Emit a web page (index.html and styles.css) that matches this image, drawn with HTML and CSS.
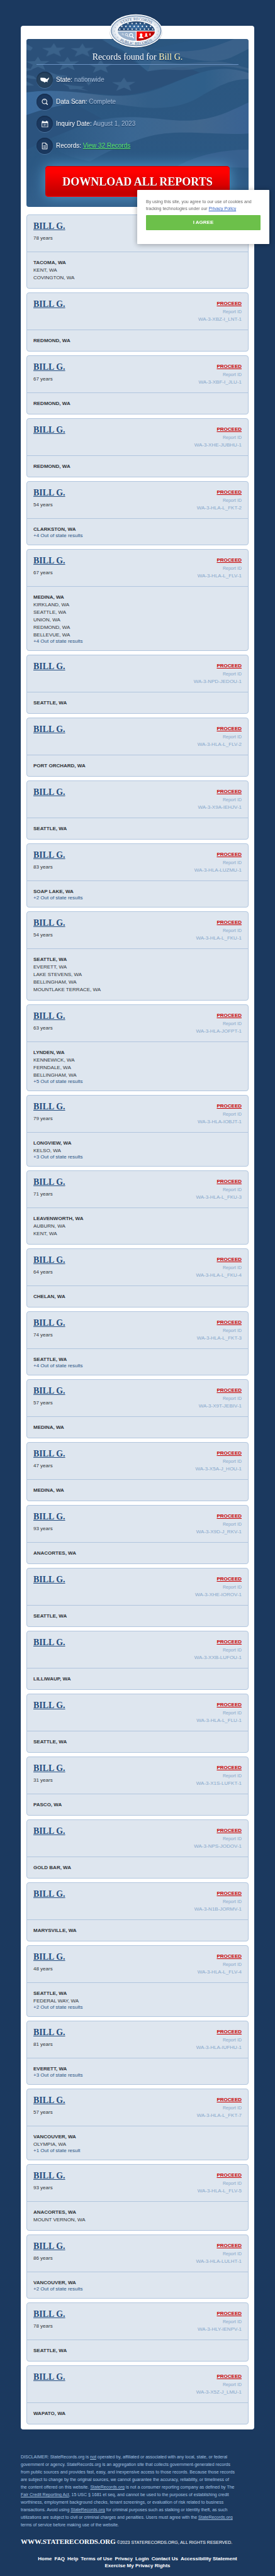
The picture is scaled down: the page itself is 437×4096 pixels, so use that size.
FILE: index.html
```html
<!DOCTYPE html>
<html lang="en">
<head>
<meta charset="utf-8">
<meta name="viewport" content="width=device-width, initial-scale=1">
<title>Records found for Bill G.</title>
<link rel="stylesheet" href="styles.css">
</head>
<body>
<main class="sheet">
  <svg class="logo" viewBox="42 58 480 310" role="img" aria-label="State Records">
    <defs>
      <radialGradient id="rim"><stop offset="0.7" stop-color="#fff"/><stop offset="1" stop-color="#ccd7e4"/></radialGradient>
      <radialGradient id="sky" cx="0.5" cy="0.6"><stop offset="0" stop-color="#3f76ad"/><stop offset="1" stop-color="#21446f"/></radialGradient>
      <radialGradient id="red" cx="0.3" cy="0.3"><stop offset="0.4" stop-color="#f00"/><stop offset="1" stop-color="#b80000"/></radialGradient>
      <clipPath id="oval"><ellipse cx="285" cy="213" rx="161" ry="84"/></clipPath>
      <path id="arc-top" d="M109 214A173 92 0 0 1 461 214"/>
      <path id="arc-bottom" d="M90 216A195 116 0 0 0 480 216"/>
      <path id="star" d="M0-10 2.4-3.2H9.5L3.8 1.2 5.9 8.1 0 4-5.9 8.1-3.8 1.2-9.5-3.2H-2.4Z"/>
      <g id="lens" fill="none" stroke="#fff"><circle r="12" stroke-width="5"/><path d="M9 10 20 22" stroke-width="7"/></g>
      <path id="bust" d="M0-22C-9-22-12-15-11-8-10-2-7 0-7 5-9 9-21 9-22 21H22C21 9 9 9 7 5 7 0 10-2 11-8 12-15 9-22 0-22Z"/>
    </defs>
    <ellipse cx="282" cy="218" rx="229" ry="143" fill="#12263f" opacity="0.35"/>
    <ellipse cx="282" cy="211" rx="229" ry="143" fill="#fff"/>
    <ellipse cx="284" cy="211" rx="216" ry="130" fill="url(#rim)" stroke="#3a608c" stroke-width="5"/>
    <g clip-path="url(#oval)">
      <path fill="url(#sky)" d="M120 125H450V209H120Z"/>
      <path fill="#9ab2cd" d="M120 216H281V300H120Z"/>
      <path fill="url(#red)" d="M288 216H450V300H288Z"/>
    </g>
    <g fill="#fff">
      <use href="#star" x="213" y="147"/><use href="#star" x="249" y="147"/><use href="#star" x="285" y="147"/><use href="#star" x="320" y="147"/><use href="#star" x="356" y="147"/>
      <use href="#star" x="160" y="172"/><use href="#star" x="195" y="172"/><use href="#star" x="231" y="172"/><use href="#star" x="267" y="172"/><use href="#star" x="302" y="172"/><use href="#star" x="338" y="172"/><use href="#star" x="374" y="172"/><use href="#star" x="409" y="172"/>
      <use href="#star" x="142" y="196"/><use href="#star" x="178" y="196"/><use href="#star" x="213" y="196"/><use href="#star" x="249" y="196"/><use href="#star" x="285" y="196"/><use href="#star" x="320" y="196"/><use href="#star" x="356" y="196"/><use href="#star" x="391" y="196"/><use href="#star" x="427" y="196"/>
      <use href="#bust" x="327" y="254"/>
      <use href="#bust" transform="translate(371 247) scale(0.7)"/>
      <use href="#bust" transform="translate(404 241) scale(0.42)"/>
    </g>
    <use href="#lens" transform="translate(167 239) scale(0.5)"/>
    <use href="#lens" transform="translate(200 244) scale(0.85)"/>
    <use href="#lens" transform="translate(240 249) scale(1.2)"/>
    <g fill="#6f8fb3"><circle cx="122" cy="160" r="3"/><circle cx="103" cy="182" r="3"/><circle cx="94" cy="212" r="3"/><circle cx="103" cy="242" r="3"/><circle cx="124" cy="266" r="3"/><circle cx="446" cy="160" r="3"/><circle cx="466" cy="182" r="3"/><circle cx="475" cy="212" r="3"/><circle cx="466" cy="242" r="3"/><circle cx="446" cy="266" r="3"/></g>
    <text class="logo-text"><textPath href="#arc-top" startOffset="50%">STATE RECORDS</textPath></text>
    <text class="logo-text"><textPath href="#arc-bottom" startOffset="50%">PUBLIC RECORDS</textPath></text>
  </svg>

  <section class="hero">
    <svg class="flag" viewBox="0 24 1539 1469" preserveAspectRatio="none" aria-hidden="true">
      <defs>
        <linearGradient id="field" x1="0" y1="0" x2="0" y2="1"><stop offset="0" stop-color="#2b567f"/><stop offset="0.75" stop-color="#2c5883"/><stop offset="1" stop-color="#335f8b"/></linearGradient>
        <linearGradient id="fold"><stop offset="0" stop-color="#3b6c9f"/><stop offset="0.3" stop-color="#426890"/><stop offset="0.55" stop-color="#335f89"/><stop offset="0.8" stop-color="#2f5f8a"/><stop offset="1" stop-color="#42678f"/></linearGradient>
        <linearGradient id="fold-low"><stop offset="0" stop-color="#2c5883"/><stop offset="0.4" stop-color="#3c6995"/><stop offset="0.75" stop-color="#456a91"/><stop offset="1" stop-color="#3b6496"/></linearGradient>
        <path id="fstar" d="M0-60 20-20 80-22 35 12 50 58 0 30-55 58-36 12-84-18-22-20Z"/>
      </defs>
      <path fill="url(#field)" d="M0 24H1539V1493H0Z"/>
      <path fill="#2b5079" d="M0 24H530L840 308C980 240 1100 260 1200 320 1000 400 880 500 640 520 400 500 200 450 0 490Z"/>
      <path fill="#3a6793" d="M525 30 700 24C800 90 900 170 870 205 1000 215 1060 260 1180 250L840 308C760 230 700 120 600 90Z" opacity="0.6"/>
      <path fill="#42678e" d="M840 110C960 100 1060 95 1180 85 1280 70 1340 45 1420 24H1539V110C1440 170 1400 215 1280 217 1120 215 1010 140 840 110Z" opacity="0.7"/>
      <path fill="#2b5782" d="M840 110C1000 140 1120 140 1240 110 1340 80 1400 40 1440 24H1200C1060 50 950 100 840 110Z"/>
      <path fill="#42678e" d="M870 205C1060 270 1200 215 1330 222 1430 230 1480 265 1539 280V300C1400 250 1270 255 1150 290 1050 310 940 270 840 308Z" opacity="0.6"/>
      <path fill="url(#fold)" d="M0 492C150 465 300 480 450 505 620 530 740 530 880 475 1080 390 1200 285 1380 286 1450 290 1500 305 1539 322V375C1420 375 1340 430 1220 515 1120 600 1010 630 860 627 700 620 560 570 430 575 260 585 110 640 0 690Z"/>
      <path fill="#2b507c" d="M0 690C90 650 200 610 330 590L520 720C400 740 280 850 180 885 100 920 60 960 0 990Z" opacity="0.6"/>
      <path fill="url(#fold-low)" d="M180 885C380 790 470 710 720 708 900 710 1000 745 1150 737 1330 720 1430 640 1539 580V850C1380 865 1250 840 1060 843 860 850 780 900 640 970 560 1010 500 1050 440 1095 300 1060 150 1000 180 885Z" opacity="0.85"/>
      <path fill="#3c6492" d="M1040 1140C1150 1060 1320 990 1539 992V1150Z" opacity="0.8"/>
      <g fill="#416890" opacity="0.75">
        <use href="#fstar" x="190" y="120"/><use href="#fstar" x="388" y="122"/><use href="#fstar" x="285" y="240"/><use href="#fstar" x="515" y="262"/><use href="#fstar" x="676" y="420"/><use href="#fstar" x="80" y="238"/>
        <path d="M0 66 45 100 30 125 0 120ZM155 310 210 335 290 345 235 365 250 390 195 370 155 378 180 345ZM380 350 430 370 515 375 460 395 430 430 410 395ZM250 415 320 430 405 440 380 455 435 478 350 462 300 465 290 440ZM0 275 45 292 0 305ZM5 335 50 350 72 375 30 372 0 362ZM0 395 55 430 0 432Z"/>
      </g>
    </svg>
    <h1 class="title">Records found for <span class="who">Bill G.</span></h1>
    <ul class="facts">
      <li class="fact"><span class="badge badge-map"><svg viewBox="0 0 26 26"><path fill="#fff" d="M6.5 9.4 12.8 9.8 14.6 10.5 16 12 18.4 10.6 19.2 9.4 20.1 9.6 19.6 11.5 18.4 13.2 17.4 14.9 17.9 17.2 16.7 16 13.9 16.2 12.7 17.5 11.4 15.9 8.2 15.1 6.6 13.6 6.1 11.4Z"/></svg></span><span>State: <span class="value">nationwide</span></span></li>
      <li class="fact"><span class="badge"><svg viewBox="0 0 26 26" fill="none" stroke="#fff"><circle cx="12.7" cy="12.3" r="3.7" stroke-width="1.1"/><path d="M11.3 11.1Q12.6 9.8 13.9 11.1" stroke-width="0.5"/><path d="M15.5 15.2 17.8 17.5" stroke-width="1.6"/></svg></span><span>Data Scan: <span class="value">Complete</span></span></li>
      <li class="fact"><span class="badge"><svg viewBox="0 0 26 26"><path fill="#fff" fill-rule="evenodd" d="M8.3 9.2H9.4V8.1H10.8V9.2H15.6V8.1H17V9.2H18.4V18.3H8.3ZM9.2 11.7V17.4H17.5V11.7Z"/><path fill="none" stroke="#fff" stroke-width="0.6" d="M11.2 13.2H12.8V15.9H11.2M11.5 14.5H12.8M14.1 13.6 15 13.2V16.1"/></svg></span><span>Inquiry Date: <span class="value">August 1, 2023</span></span></li>
      <li class="fact"><span class="badge"><svg viewBox="0 0 26 26" fill="none" stroke="#fff"><path d="M9.2 8.3H14.6L16.9 10.6V17.9H9.2Z" stroke-width="1"/><path d="M14.6 8.3V10.6H16.9" stroke-width="0.8"/><path d="M10.8 12.6H15.3M10.8 14.2H15.3M10.8 15.8H15.3" stroke-width="0.7"/></svg></span><span>Records: <a class="view" href="#records">View 32 Records</a></span></li>
    </ul>
    <button class="download" type="button">DOWNLOAD ALL REPORTS</button>
  </section>

  <section class="records" id="records">
    <article class="card"><div class="top"><div><h2 class="name"><a href="#">BILL G.</a></h2><p class="age">78 years</p></div><div class="report"><a class="proceed" href="#">PROCEED</a><p class="label">Report ID</p><p class="code">WA-3-HLA-L_FKT-1</p></div></div><ul class="places"><li>TACOMA, WA</li><li>KENT, WA</li><li>COVINGTON, WA</li></ul></article>
    <article class="card"><div class="top"><div><h2 class="name"><a href="#">BILL G.</a></h2></div><div class="report"><a class="proceed" href="#">PROCEED</a><p class="label">Report ID</p><p class="code">WA-3-XBZ-I_LNT-1</p></div></div><ul class="places"><li>REDMOND, WA</li></ul></article>
    <article class="card"><div class="top"><div><h2 class="name"><a href="#">BILL G.</a></h2><p class="age">67 years</p></div><div class="report"><a class="proceed" href="#">PROCEED</a><p class="label">Report ID</p><p class="code">WA-3-XBF-I_JLU-1</p></div></div><ul class="places"><li>REDMOND, WA</li></ul></article>
    <article class="card"><div class="top"><div><h2 class="name"><a href="#">BILL G.</a></h2></div><div class="report"><a class="proceed" href="#">PROCEED</a><p class="label">Report ID</p><p class="code">WA-3-XHE-JUBHU-1</p></div></div><ul class="places"><li>REDMOND, WA</li></ul></article>
    <article class="card"><div class="top"><div><h2 class="name"><a href="#">BILL G.</a></h2><p class="age">54 years</p></div><div class="report"><a class="proceed" href="#">PROCEED</a><p class="label">Report ID</p><p class="code">WA-3-HLA-L_FKT-2</p></div></div><ul class="places"><li>CLARKSTON, WA</li><li class="more">+4 Out of state results</li></ul></article>
    <article class="card"><div class="top"><div><h2 class="name"><a href="#">BILL G.</a></h2><p class="age">67 years</p></div><div class="report"><a class="proceed" href="#">PROCEED</a><p class="label">Report ID</p><p class="code">WA-3-HLA-L_FLV-1</p></div></div><ul class="places"><li>MEDINA, WA</li><li>KIRKLAND, WA</li><li>SEATTLE, WA</li><li>UNION, WA</li><li>REDMOND, WA</li><li>BELLEVUE, WA</li><li class="more">+4 Out of state results</li></ul></article>
    <article class="card"><div class="top"><div><h2 class="name"><a href="#">BILL G.</a></h2></div><div class="report"><a class="proceed" href="#">PROCEED</a><p class="label">Report ID</p><p class="code">WA-3-NPD-JEDOU-1</p></div></div><ul class="places"><li>SEATTLE, WA</li></ul></article>
    <article class="card"><div class="top"><div><h2 class="name"><a href="#">BILL G.</a></h2></div><div class="report"><a class="proceed" href="#">PROCEED</a><p class="label">Report ID</p><p class="code">WA-3-HLA-L_FLV-2</p></div></div><ul class="places"><li>PORT ORCHARD, WA</li></ul></article>
    <article class="card"><div class="top"><div><h2 class="name"><a href="#">BILL G.</a></h2></div><div class="report"><a class="proceed" href="#">PROCEED</a><p class="label">Report ID</p><p class="code">WA-3-X9A-IEHJV-1</p></div></div><ul class="places"><li>SEATTLE, WA</li></ul></article>
    <article class="card"><div class="top"><div><h2 class="name"><a href="#">BILL G.</a></h2><p class="age">83 years</p></div><div class="report"><a class="proceed" href="#">PROCEED</a><p class="label">Report ID</p><p class="code">WA-3-HLA-LUZMU-1</p></div></div><ul class="places"><li>SOAP LAKE, WA</li><li class="more">+2 Out of state results</li></ul></article>
    <article class="card"><div class="top"><div><h2 class="name"><a href="#">BILL G.</a></h2><p class="age">54 years</p></div><div class="report"><a class="proceed" href="#">PROCEED</a><p class="label">Report ID</p><p class="code">WA-3-HLA-L_FKU-1</p></div></div><ul class="places"><li>SEATTLE, WA</li><li>EVERETT, WA</li><li>LAKE STEVENS, WA</li><li>BELLINGHAM, WA</li><li>MOUNTLAKE TERRACE, WA</li></ul></article>
    <article class="card"><div class="top"><div><h2 class="name"><a href="#">BILL G.</a></h2><p class="age">63 years</p></div><div class="report"><a class="proceed" href="#">PROCEED</a><p class="label">Report ID</p><p class="code">WA-3-HLA-JOFPT-1</p></div></div><ul class="places"><li>LYNDEN, WA</li><li>KENNEWICK, WA</li><li>FERNDALE, WA</li><li>BELLINGHAM, WA</li><li class="more">+5 Out of state results</li></ul></article>
    <article class="card"><div class="top"><div><h2 class="name"><a href="#">BILL G.</a></h2><p class="age">79 years</p></div><div class="report"><a class="proceed" href="#">PROCEED</a><p class="label">Report ID</p><p class="code">WA-3-HLA-IOBJT-1</p></div></div><ul class="places"><li>LONGVIEW, WA</li><li>KELSO, WA</li><li class="more">+3 Out of state results</li></ul></article>
    <article class="card"><div class="top"><div><h2 class="name"><a href="#">BILL G.</a></h2><p class="age">71 years</p></div><div class="report"><a class="proceed" href="#">PROCEED</a><p class="label">Report ID</p><p class="code">WA-3-HLA-L_FKU-3</p></div></div><ul class="places"><li>LEAVENWORTH, WA</li><li>AUBURN, WA</li><li>KENT, WA</li></ul></article>
    <article class="card"><div class="top"><div><h2 class="name"><a href="#">BILL G.</a></h2><p class="age">64 years</p></div><div class="report"><a class="proceed" href="#">PROCEED</a><p class="label">Report ID</p><p class="code">WA-3-HLA-L_FKU-4</p></div></div><ul class="places"><li>CHELAN, WA</li></ul></article>
    <article class="card"><div class="top"><div><h2 class="name"><a href="#">BILL G.</a></h2><p class="age">74 years</p></div><div class="report"><a class="proceed" href="#">PROCEED</a><p class="label">Report ID</p><p class="code">WA-3-HLA-L_FKT-3</p></div></div><ul class="places"><li>SEATTLE, WA</li><li class="more">+4 Out of state results</li></ul></article>
    <article class="card"><div class="top"><div><h2 class="name"><a href="#">BILL G.</a></h2><p class="age">57 years</p></div><div class="report"><a class="proceed" href="#">PROCEED</a><p class="label">Report ID</p><p class="code">WA-3-X9T-JEBIV-1</p></div></div><ul class="places"><li>MEDINA, WA</li></ul></article>
    <article class="card"><div class="top"><div><h2 class="name"><a href="#">BILL G.</a></h2><p class="age">47 years</p></div><div class="report"><a class="proceed" href="#">PROCEED</a><p class="label">Report ID</p><p class="code">WA-3-X5A-J_HOU-1</p></div></div><ul class="places"><li>MEDINA, WA</li></ul></article>
    <article class="card"><div class="top"><div><h2 class="name"><a href="#">BILL G.</a></h2><p class="age">93 years</p></div><div class="report"><a class="proceed" href="#">PROCEED</a><p class="label">Report ID</p><p class="code">WA-3-X9D-J_RKV-1</p></div></div><ul class="places"><li>ANACORTES, WA</li></ul></article>
    <article class="card"><div class="top"><div><h2 class="name"><a href="#">BILL G.</a></h2></div><div class="report"><a class="proceed" href="#">PROCEED</a><p class="label">Report ID</p><p class="code">WA-3-XHE-IOROV-1</p></div></div><ul class="places"><li>SEATTLE, WA</li></ul></article>
    <article class="card"><div class="top"><div><h2 class="name"><a href="#">BILL G.</a></h2></div><div class="report"><a class="proceed" href="#">PROCEED</a><p class="label">Report ID</p><p class="code">WA-3-XXB-LUFOU-1</p></div></div><ul class="places"><li>LILLIWAUP, WA</li></ul></article>
    <article class="card"><div class="top"><div><h2 class="name"><a href="#">BILL G.</a></h2></div><div class="report"><a class="proceed" href="#">PROCEED</a><p class="label">Report ID</p><p class="code">WA-3-HLA-L_FLU-1</p></div></div><ul class="places"><li>SEATTLE, WA</li></ul></article>
    <article class="card"><div class="top"><div><h2 class="name"><a href="#">BILL G.</a></h2><p class="age">31 years</p></div><div class="report"><a class="proceed" href="#">PROCEED</a><p class="label">Report ID</p><p class="code">WA-3-X1S-LUFKT-1</p></div></div><ul class="places"><li>PASCO, WA</li></ul></article>
    <article class="card"><div class="top"><div><h2 class="name"><a href="#">BILL G.</a></h2></div><div class="report"><a class="proceed" href="#">PROCEED</a><p class="label">Report ID</p><p class="code">WA-3-NPS-JODOV-1</p></div></div><ul class="places"><li>GOLD BAR, WA</li></ul></article>
    <article class="card"><div class="top"><div><h2 class="name"><a href="#">BILL G.</a></h2></div><div class="report"><a class="proceed" href="#">PROCEED</a><p class="label">Report ID</p><p class="code">WA-3-N1B-JORMV-1</p></div></div><ul class="places"><li>MARYSVILLE, WA</li></ul></article>
    <article class="card"><div class="top"><div><h2 class="name"><a href="#">BILL G.</a></h2><p class="age">48 years</p></div><div class="report"><a class="proceed" href="#">PROCEED</a><p class="label">Report ID</p><p class="code">WA-3-HLA-L_FLV-4</p></div></div><ul class="places"><li>SEATTLE, WA</li><li>FEDERAL WAY, WA</li><li class="more">+2 Out of state results</li></ul></article>
    <article class="card"><div class="top"><div><h2 class="name"><a href="#">BILL G.</a></h2><p class="age">81 years</p></div><div class="report"><a class="proceed" href="#">PROCEED</a><p class="label">Report ID</p><p class="code">WA-3-HLA-IUFHU-1</p></div></div><ul class="places"><li>EVERETT, WA</li><li class="more">+3 Out of state results</li></ul></article>
    <article class="card"><div class="top"><div><h2 class="name"><a href="#">BILL G.</a></h2><p class="age">57 years</p></div><div class="report"><a class="proceed" href="#">PROCEED</a><p class="label">Report ID</p><p class="code">WA-3-HLA-L_FKT-7</p></div></div><ul class="places"><li>VANCOUVER, WA</li><li>OLYMPIA, WA</li><li class="more">+1 Out of state result</li></ul></article>
    <article class="card"><div class="top"><div><h2 class="name"><a href="#">BILL G.</a></h2><p class="age">93 years</p></div><div class="report"><a class="proceed" href="#">PROCEED</a><p class="label">Report ID</p><p class="code">WA-3-HLA-L_FLV-5</p></div></div><ul class="places"><li>ANACORTES, WA</li><li>MOUNT VERNON, WA</li></ul></article>
    <article class="card"><div class="top"><div><h2 class="name"><a href="#">BILL G.</a></h2><p class="age">86 years</p></div><div class="report"><a class="proceed" href="#">PROCEED</a><p class="label">Report ID</p><p class="code">WA-3-HLA-LULHT-1</p></div></div><ul class="places"><li>VANCOUVER, WA</li><li class="more">+2 Out of state results</li></ul></article>
    <article class="card"><div class="top"><div><h2 class="name"><a href="#">BILL G.</a></h2><p class="age">78 years</p></div><div class="report"><a class="proceed" href="#">PROCEED</a><p class="label">Report ID</p><p class="code">WA-3-HLY-IENPV-1</p></div></div><ul class="places"><li>SEATTLE, WA</li></ul></article>
    <article class="card"><div class="top"><div><h2 class="name"><a href="#">BILL G.</a></h2></div><div class="report"><a class="proceed" href="#">PROCEED</a><p class="label">Report ID</p><p class="code">WA-3-X5Z-J_LMU-1</p></div></div><ul class="places"><li>WAPATO, WA</li></ul></article>
  </section>
</main>

<footer class="footer">
  <p class="disclaimer">DISCLAIMER: StateRecords.org is <u>not</u> operated by, affiliated or associated with any local, state, or federal<br>
    government or agency. StateRecords.org is an aggregation site that collects government-generated records<br>
    from public sources and provides fast, easy, and inexpensive access to those records. Because those records<br>
    are subject to change by the original sources, we cannot guarantee the accuracy, reliability, or timeliness of<br>
    the content offered on this website. <a href="#">StateRecords.org</a> is not a consumer reporting company as defined by The<br>
    <a href="#">Fair Credit Reporting Act</a>, 15 USC § 1681 et seq, and cannot be used to the purposes of establishing credit<br>
    worthiness, employment background checks, tenant screenings, or evaluation of risk related to business<br>
    transactions. Avoid using <a href="#">StateRecords.org</a> for criminal purposes such as stalking or identity theft, as such<br>
    utilizations are subject to civil or criminal charges and penalties. Users must agree with the <a href="#">StateRecords.org</a><br>
    terms of service before making use of the website.</p>
  <p class="brand"><strong class="site">WWW.STATERECORDS.ORG</strong> ©2023 STATERECORDS.ORG, ALL RIGHTS RESERVED.</p>
  <nav class="links">
    <a href="#">Home</a><a href="#">FAQ</a><a href="#">Help</a><a href="#">Terms of Use</a><a href="#">Privacy</a><a href="#">Login</a><a href="#">Contact Us</a><a href="#">Accessibility Statement</a><a href="#">Exercise My Privacy Rights</a>
  </nav>
</footer>

<aside class="cookie">
  <p class="cookie-text">By using this site, you agree to our use of cookies and tracking technologies under our <a href="#">Privacy Policy</a></p>
  <button class="agree" type="button">I AGREE</button>
</aside>
</body>
</html>
```
FILE: styles.css
```css
* {
  box-sizing: border-box;
}

body {
  position: relative;
  margin: 0;
  padding: 41px 33px 13px;
  background: #1b395f;
  color: #2f3338;
  font: 8px/12px "Liberation Sans", Arial, sans-serif;
}

h1, h2, p, ul {
  margin: 0;
  padding: 0;
}

ul {
  list-style: none;
}

.sheet {
  position: relative;
  padding: 21px 9px 8px;
  border-radius: 4px;
  background: #fff;
}

.logo {
  position: absolute;
  z-index: 1;
  top: -20px;
  left: calc(50% - 47px);
  width: 88px;
}

.logo-text {
  fill: #3a608c;
  font-family: "Liberation Serif", serif;
  font-size: 35px;
  text-anchor: middle;
}

.hero {
  position: relative;
  display: flex;
  flex-direction: column;
  overflow: hidden;
  padding: 20px 16px 16px;
  border-radius: 4px;
  color: #fff;
}

.flag {
  position: absolute;
  inset: 0;
  width: 100%;
  height: 100%;
}

.title {
  position: relative;
  padding-bottom: 2px;
  border-bottom: 1px solid #6b93c4;
  font: 14px/18px "Liberation Serif", "Times New Roman", serif;
  text-align: center;
  text-shadow: 0 1px 1px #1b395f;
}

.who {
  color: #fff3b8;
}

.facts {
  position: relative;
  display: grid;
  gap: 9px;
  margin-top: 11px;
  font-size: 10px;
  line-height: 14px;
}

.fact {
  display: flex;
  align-items: center;
  gap: 5px;
  text-shadow: 0 1px 1px #1b395f;
}

.badge {
  display: block;
  width: 26px;
  height: 26px;
  border-radius: 50%;
  background: #1b385e;
  box-shadow: inset 0 1px 2px #132947, 0 1px 0 #4a739f;
}

.badge-map {
  background: #26415c;
}

.badge svg {
  display: block;
}

.value {
  color: #a9c0dc;
}

.view {
  color: #5cf06c;
}

.download {
  position: relative;
  height: 49px;
  margin: 19px 14px 0;
  padding: 0;
  border: 0;
  border-radius: 5px;
  background: linear-gradient(#f00 20%, #c60000 85%);
  box-shadow: inset 0 1px 0 #c60000, inset 0 -1px 0 #f00, 0 0 22px #529cca;
  color: #fff;
  font: bold 18px/20px "Liberation Serif", "Times New Roman", serif;
  text-shadow: 0 1px 1px #700;
  white-space: nowrap;
}

.records {
  display: grid;
  gap: 6px;
  margin-top: 12px;
}

.card {
  border: 1px solid #b0c5de;
  border-radius: 4px;
  background: #dee6ef;
}

.top {
  display: flex;
  justify-content: space-between;
  padding: 10px;
  border-bottom: 1px solid #b0c5de;
}

.name {
  font: bold 14px/16px "Liberation Serif", "Times New Roman", serif;
}

.name a {
  color: #254e80;
}

.age {
  margin-top: 5px;
}

.report {
  color: #86a6cb;
  text-align: right;
}

.proceed {
  display: block;
  color: #c80000;
  font-weight: bold;
  line-height: 13px;
}

.label {
  font-size: 7px;
  line-height: 13px;
}

.places {
  padding: 11px 10px 10px;
}

.places li:first-child {
  font-weight: bold;
}

.places .more {
  color: #2b5585;
  line-height: 8px;
}

.footer {
  padding-top: 38px;
  color: #fff;
}

.disclaimer {
  color: #a3c1e0;
  font-size: 7px;
}

.disclaimer a {
  color: inherit;
}

.brand {
  margin-top: 13px;
  font-size: 7px;
  line-height: 14px;
  white-space: nowrap;
}

.site {
  font: bold 11px/14px "Liberation Serif", "Times New Roman", serif;
}

.links {
  display: flex;
  flex-wrap: wrap;
  justify-content: center;
  gap: 0 4px;
  margin-top: 13px;
  font-weight: bold;
  line-height: 11px;
}

.links a {
  color: #fff;
  text-decoration: none;
  white-space: nowrap;
}

.cookie {
  position: absolute;
  z-index: 2;
  top: 302px;
  right: 9px;
  width: 210px;
  padding: 13px 14px 22px;
  border-radius: 1px;
  background: #fff;
  box-shadow: 0 1px 8px #0005;
  color: #666;
  font-size: 7px;
  line-height: 11px;
}

.cookie-text a {
  color: #2d5fc4;
}

.agree {
  display: block;
  width: 100%;
  height: 24px;
  margin-top: 5px;
  padding: 0;
  border: 0;
  border-radius: 1px;
  background: #6cc04a;
  color: #fff;
  font: bold 8px/12px "Liberation Sans", Arial, sans-serif;
}
```
